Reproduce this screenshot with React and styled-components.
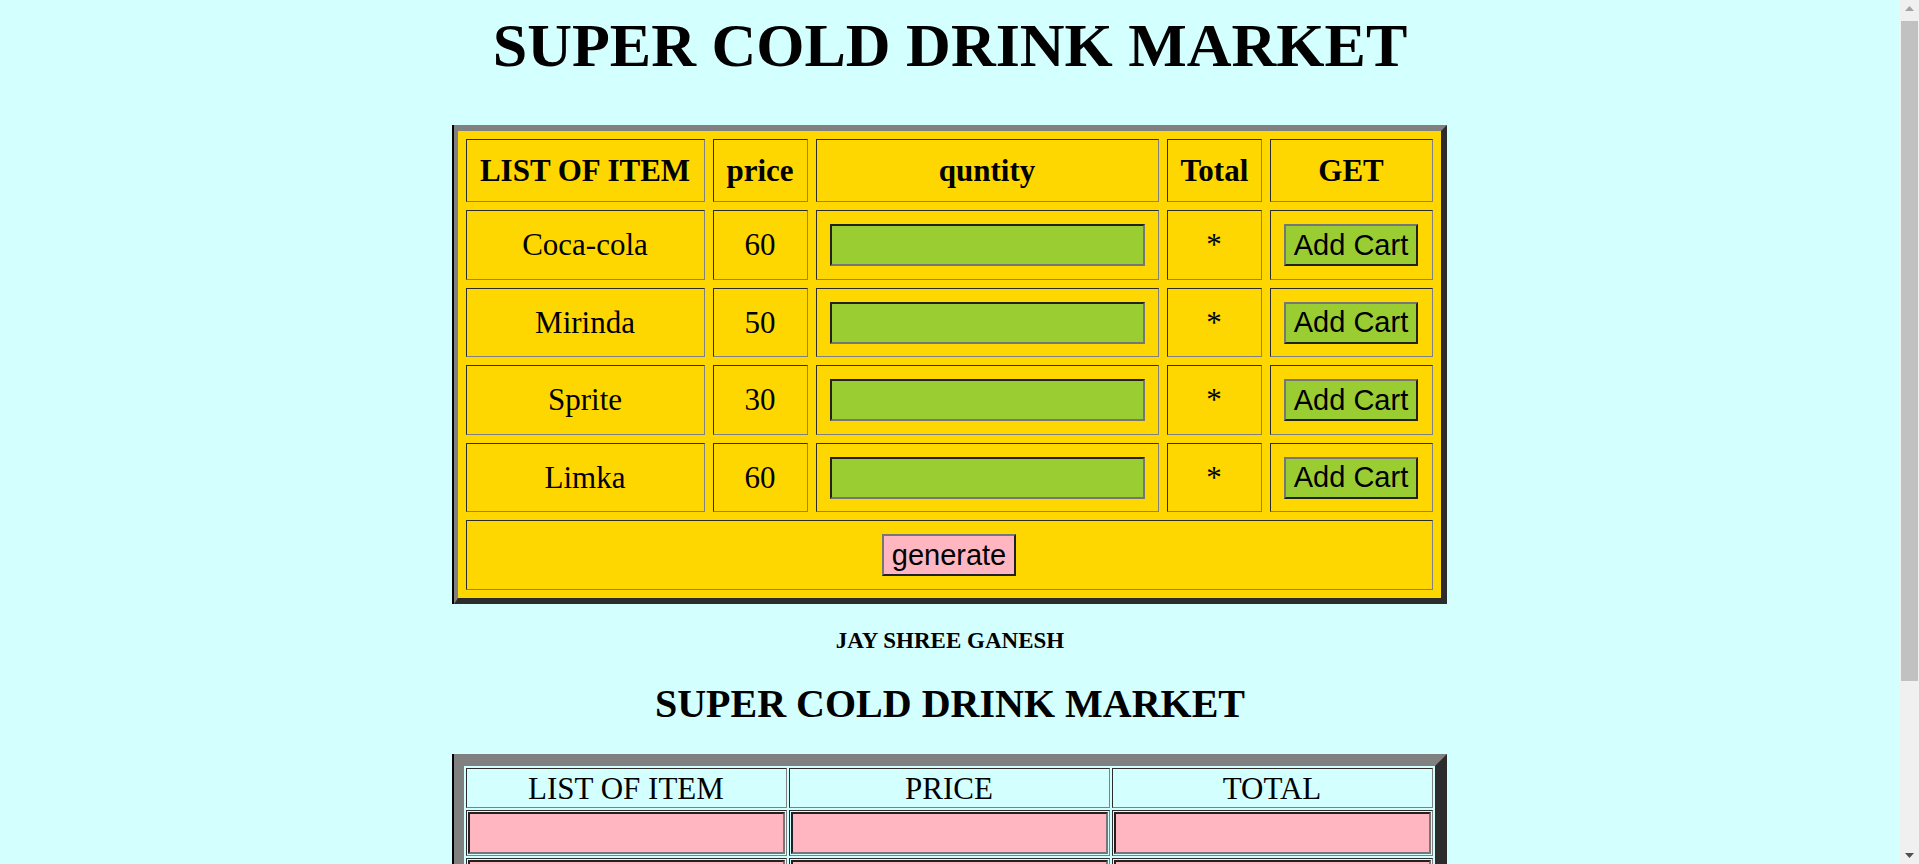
import styled, { createGlobalStyle } from "styled-components";

const GlobalStyle = createGlobalStyle`
  body {
    margin: 0;
    background: #d4ffff;
    font-family: "Liberation Serif", "Times New Roman", serif;
    color: #000;
  }
  * {
    box-sizing: border-box;
  }
`;

// page is laid out as if a 19px scrollbar takes the right edge
const Page = styled.div`
  display: flex;
  flex-direction: column;
  align-items: center;
  padding: 10px 27px 17px 8px;
`;

const Title = styled.h1`
  margin: 0;
  font-size: 62px;
  line-height: 71px;
  font-weight: bold;
`;

const ShopTable = styled.table`
  margin-top: 44px;
  width: 993px;
  table-layout: fixed;
  border-collapse: separate;
  border-spacing: 8px;
  background: #ffd700;
  border-style: outset;
  border-color: grey;
  border-width: 6px 6px 6px 4px;
  box-shadow: -2px 0 0 #000;
`;

const Cell = styled.td`
  border: 1px inset grey;
  padding: 13px 13px 12.5px;
  text-align: center;
  vertical-align: middle;
  font-size: 31px;
  line-height: 35.5px;
  font-weight: normal;
  white-space: nowrap;
`;

const HeadCell = styled(Cell).attrs({ as: "th" })`
  font-weight: bold;
  width: ${(p) => p.$w}px;
`;

const QtyInput = styled.input`
  display: block;
  width: 100%;
  height: 42px;
  margin: 0;
  background: #9acd32;
  border: 2px inset rgb(118, 118, 118);
`;

const Button = styled.button`
  height: 42px;
  padding: 0 8px;
  margin: 0;
  font-family: "Liberation Sans", Arial, sans-serif;
  font-size: 29px;
  color: #000;
  white-space: nowrap;
  background: ${(p) => (p.$pink ? "#ffb6c1" : "#9acd32")};
  border: 2px outset rgb(118, 118, 118);
  vertical-align: middle;
`;

const Blessing = styled.h4`
  margin: 24px 0 0;
  font-size: 23px;
  line-height: 25px;
  font-weight: bold;
`;

const SubTitle = styled.h2`
  margin: 29px 0 0;
  font-size: 40px;
  line-height: 44px;
  font-weight: bold;
`;

const BillTable = styled.table`
  margin-top: 28px;
  width: 993px;
  table-layout: fixed;
  border-collapse: separate;
  border-spacing: 2px;
  background: #d4ffff;
  border-style: outset;
  border-color: grey;
  border-width: 12px 12px 12px 10px;
  box-shadow: -2px 0 0 #000;
`;

const BillCell = styled.td`
  border: 1px inset grey;
  padding: ${(p) => (p.$head ? "2px 1px 1px" : "1px")};
  text-align: center;
  vertical-align: middle;
  font-size: 31px;
  line-height: 35.5px;
  font-weight: normal;
`;

const BillInput = styled.input`
  display: block;
  width: 100%;
  height: 42px;
  margin: 0;
  background: #ffb6c1;
  border: 2px inset rgb(118, 118, 118);
`;

const ScrollTrack = styled.div`
  position: fixed;
  top: 0;
  right: 0;
  width: 19px;
  height: 100vh;
  background: #f0f0f0;
  display: flex;
  flex-direction: column;
  align-items: center;
  padding: 0 1px;
`;

const ScrollArrow = styled.div`
  height: 17px;
  width: 100%;
  display: flex;
  align-items: center;
  justify-content: center;
`;

const ScrollThumb = styled.div`
  width: 100%;
  height: 660px;
  margin-top: 4px;
  background: #c1c1c1;
`;

const ScrollRest = styled.div`
  flex: 1;
`;

const Arrow = ({ down, color }) => (
  <svg width="9" height="5" viewBox="0 0 9 5">
    <path d={down ? "M0 0h9L4.5 5z" : "M0 5h9L4.5 0z"} fill={color} />
  </svg>
);

const items = [
  { name: "Coca-cola", price: 60 },
  { name: "Mirinda", price: 50 },
  { name: "Sprite", price: 30 },
  { name: "Limka", price: 60 },
];

const App = () => {
  return (
    <Page>
      <GlobalStyle />
      <Title>SUPER COLD DRINK MARKET</Title>

      <ShopTable>
        <thead>
          <tr>
            <HeadCell $w={239}>LIST OF ITEM</HeadCell>
            <HeadCell $w={95}>price</HeadCell>
            <HeadCell $w={343}>quntity</HeadCell>
            <HeadCell $w={95}>Total</HeadCell>
            <HeadCell $w={163}>GET</HeadCell>
          </tr>
        </thead>
        <tbody>
          {items.map((item) => (
            <tr key={item.name}>
              <Cell>{item.name}</Cell>
              <Cell>{item.price}</Cell>
              <Cell>
                <QtyInput type="text" />
              </Cell>
              <Cell>*</Cell>
              <Cell>
                <Button>Add Cart</Button>
              </Cell>
            </tr>
          ))}
          <tr>
            <Cell colSpan={5}>
              <Button $pink>generate</Button>
            </Cell>
          </tr>
        </tbody>
      </ShopTable>

      <Blessing>JAY SHREE GANESH</Blessing>
      <SubTitle>SUPER COLD DRINK MARKET</SubTitle>

      <BillTable>
        <thead>
          <tr>
            <BillCell $head>LIST OF ITEM</BillCell>
            <BillCell $head>PRICE</BillCell>
            <BillCell $head>TOTAL</BillCell>
          </tr>
        </thead>
        <tbody>
          {[0, 1, 2, 3, 4].map((row) => (
            <tr key={row}>
              <BillCell>
                <BillInput type="text" />
              </BillCell>
              <BillCell>
                <BillInput type="text" />
              </BillCell>
              <BillCell>
                <BillInput type="text" />
              </BillCell>
            </tr>
          ))}
        </tbody>
      </BillTable>

      <ScrollTrack>
        <ScrollArrow>
          <Arrow color="#a3a3a3" />
        </ScrollArrow>
        <ScrollThumb />
        <ScrollRest />
        <ScrollArrow>
          <Arrow down color="#505050" />
        </ScrollArrow>
      </ScrollTrack>
    </Page>
  );
};

export default App;
